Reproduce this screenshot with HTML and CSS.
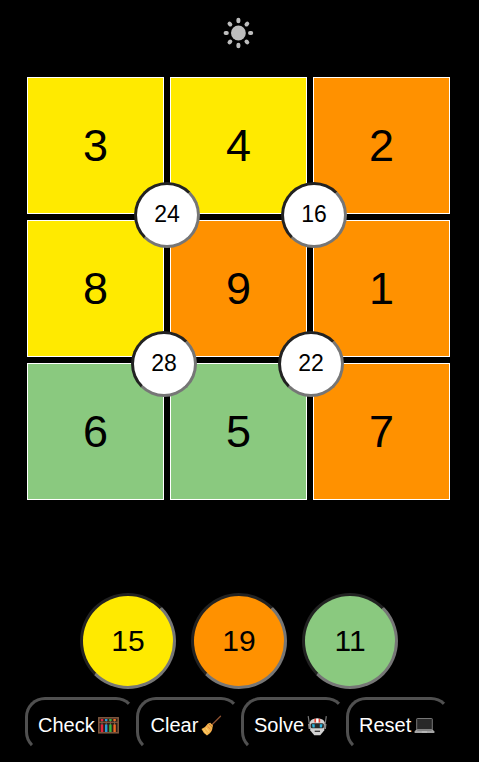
FILE: index.html
```html
<!DOCTYPE html>
<html lang="en">
<head>
<meta charset="utf-8">
<title>Suko</title>
<link rel="stylesheet" href="styles.css">
</head>
<body>
<header class="top">
  <svg class="sun" viewBox="-16.4 -16 32 32" fill="#bdbdbd" stroke="#bdbdbd" stroke-width="4" stroke-linecap="round">
    <circle r="7.4" stroke="none"/>
    <path d="M0-11.8V-13.2M0 11.8V13.2M-11.6 0H-12.8M11.6 0H12.8M-8.1-8.5L-8.9-9.3M8.1-8.5L8.9-9.3M-8.1 8.5L-8.9 9.3M8.1 8.5L8.9 9.3"/>
  </svg>
</header>
<main class="board">
  <div class="cell yellow">3</div><div class="cell yellow">4</div><div class="cell orange">2</div>
  <div class="cell yellow">8</div><div class="cell orange">9</div><div class="cell orange">1</div>
  <div class="cell green">6</div><div class="cell green">5</div><div class="cell orange">7</div>
  <div class="sum sum-a">24</div>
  <div class="sum sum-b">16</div>
  <div class="sum sum-c">28</div>
  <div class="sum sum-d">22</div>
</main>
<section class="totals">
  <div class="total yellow">15</div>
  <div class="total orange">19</div>
  <div class="total green">11</div>
</section>
<nav class="actions">
  <button class="btn check">Check<svg class="icon" viewBox="0 0 22 22">
    <rect x=".8" y="3.8" width="19.4" height="15" fill="#2b1d18" stroke="#80583f" stroke-width="1.5"/>
    <path d="M4 5V18M8.2 5V18M12.4 5V18M16.6 5V18" stroke="#79604f" stroke-width="1"/>
    <g stroke-width="2.4"><path d="M4 5V7M4 10.5V18" stroke="#e5223c"/><path d="M8.2 5V7M8.2 10.5V18" stroke="#289bd8"/><path d="M12.4 5V7M12.4 10.5V18" stroke="#35b83e"/><path d="M16.6 5V7M16.6 10.5V18" stroke="#ee6a22"/></g>
    <path d="M1 8.3H20" stroke="#80583f" stroke-width="1.2"/>
  </svg></button>
  <button class="btn clear">Clear<svg class="icon" viewBox="0 0 22 22">
    <path d="M19.5 2.2L10 11.7" stroke="#8f5231" stroke-width="1.3" stroke-linecap="round"/>
    <path d="M7.2 9.3L11.5 13.8Q11.2 18.5 6 21.5Q2.2 19.2.5 15Q4.5 13.5 7.2 9.3Z" fill="#f5b54c"/>
    <path d="M7.2 9.3L9.3 8.8L12 11.5L11.5 13.8Z" fill="#f0aa48"/>
    <path d="M5.8 11.4L10.4 16.4" stroke="#dc5239" stroke-width=".8" stroke-dasharray="1.2 .8"/>
    <path d="M2.5 15.5L5.5 19.5M5 14L7.8 17.8" stroke="#ffd77b" stroke-width=".9"/>
  </svg></button>
  <button class="btn solve">Solve<svg class="icon" viewBox="0 0 22 22">
    <path d="M1.2 2.2L2.5 11M19.3 2.2L18 11" stroke="#777" stroke-width="1.2"/>
    <path d="M1 10H3V15H1.6ZM19.5 10H17.5V15H18.9Z" fill="#888"/>
    <path d="M2.8 8.5Q3.6 4.5 10.2 4.5Q16.9 4.5 17.7 8.5L17.2 16.5L13.2 21.2H7.3L3.3 16.5Z" fill="#d2d2d2"/>
    <path d="M7.4 4.8H9.2V8.5H7.4ZM11.4 4.8H13.2V8.5H11.4Z" fill="#ee4939"/><path d="M9.2 4.5H11.4V8.5H9.2Z" fill="#fff"/>
    <rect x="3.6" y="9.3" width="13.3" height="5" rx="1.5" fill="#292929"/>
    <path d="M5 10.2H7.7V13.4H5.6ZM12.8 10.2H15.5L14.9 13.4H12.8Z" fill="#28b5e0"/>
    <path d="M7.7 17.3H13" stroke="#333" stroke-width="1.3"/>
  </svg></button>
  <button class="btn reset">Reset<svg class="icon" viewBox="0 0 22 22">
    <rect x="2.7" y="4.5" width="15.6" height="11.3" rx=".6" fill="#282828" stroke="#777" stroke-width="1"/>
    <path d="M2.2 15.6H18.6L20.4 17.6V19H.6V17.6Z" fill="#a5a5a5"/>
    <path d="M3.3 16.5H17.6" stroke="#737373" stroke-width=".8"/><path d="M7.8 18H13" stroke="#d0d0d0" stroke-width=".8"/>
  </svg></button>
</nav>
</body>
</html>
```
FILE: styles.css
```css
* { box-sizing: border-box; }
body {
  margin: 0;
  height: 762px;
  overflow: hidden;
  background: #000;
  color: #000;
  font-family: "Liberation Sans", Arial, sans-serif;
}
.top {
  height: 77px;
  padding: 17px 0 0 222px;
}
.sun { display: block; width: 32px; height: 32px; }
.board {
  position: relative;
  display: grid;
  grid-template-columns: repeat(3, 137px);
  grid-auto-rows: 137px;
  gap: 6px;
  width: 423px;
  margin-left: 27px;
}
.cell {
  display: flex;
  align-items: center;
  justify-content: center;
  border: 1px solid #fff;
  font-size: 45px;
}
.yellow { background: #ffea00; }
.orange { background: #ff9100; }
.green { background: #8ac97f; }
.sum, .total {
  display: flex;
  align-items: center;
  justify-content: center;
  border: 3px solid;
  border-color: #222 #767676 #767676 #222;
  border-radius: 50%;
}
.sum {
  position: absolute;
  width: 66px;
  height: 66px;
  padding-bottom: 2px;
  background: #fff;
  font-size: 23px;
}
.sum-a { left: 107px; top: 105px; }
.sum-b { left: 254px; top: 105px; }
.sum-c { left: 104px; top: 254px; }
.sum-d { left: 251px; top: 254px; }
.totals {
  display: flex;
  gap: 15px;
  margin: 93px 0 0 80px;
}
.total { width: 96px; height: 96px; font-size: 30px; }
.actions { display: flex; margin: 8px 0 0 25px; }
.btn {
  display: flex;
  align-items: center;
  height: 55px;
  padding: 2px 0 0 10px;
  border: 3px solid;
  border-color: #505050 #000 #000 #505050;
  border-radius: 20px;
  background: #000;
  color: #fff;
  font: 20px "Liberation Sans", Arial, sans-serif;
}
.check { width: 111px; }
.clear, .solve, .reset { width: 105px; }
.clear { padding-left: 11.5px; }
.icon { flex: none; width: 22px; height: 22px; margin: -2px 0 0 3px; }
```
